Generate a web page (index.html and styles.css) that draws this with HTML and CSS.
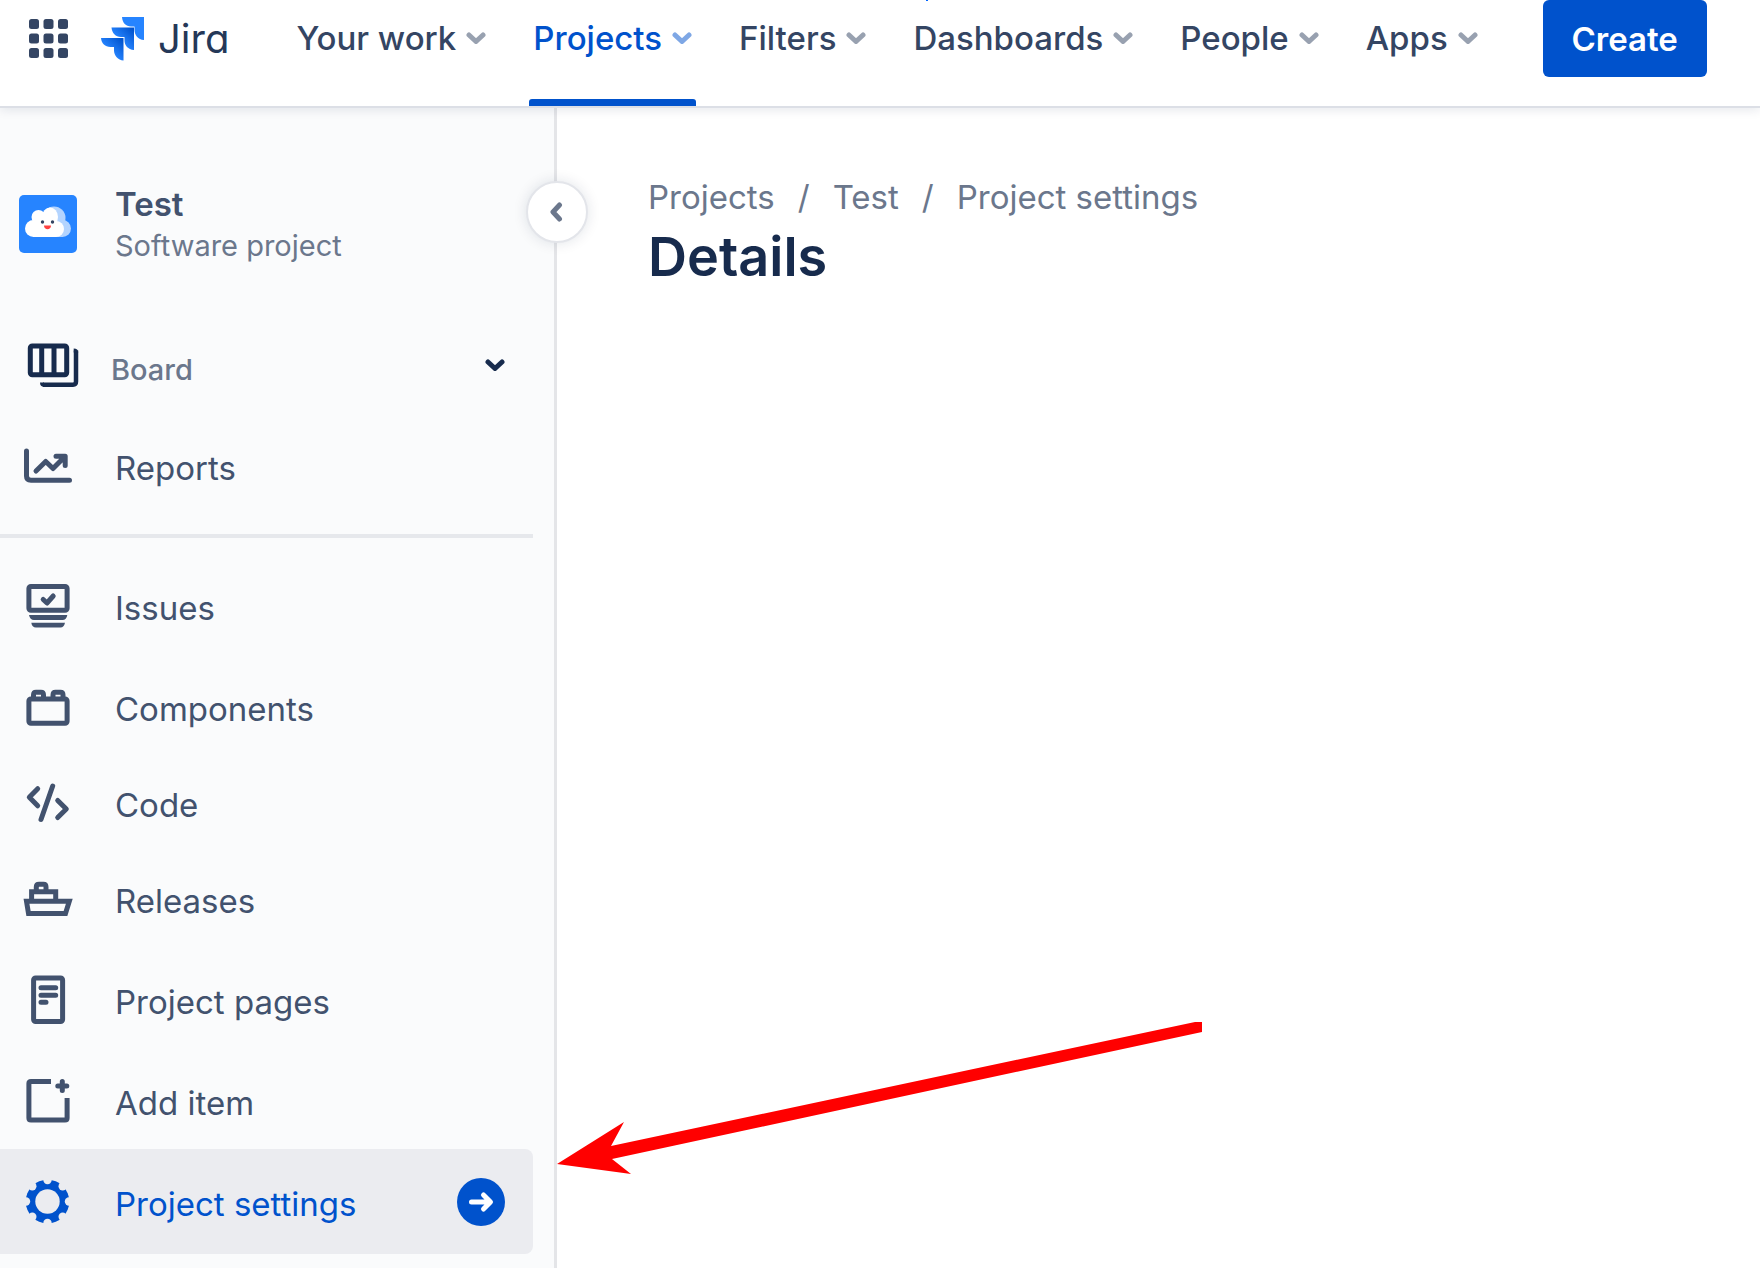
FILE: index.html
```html
<!DOCTYPE html>
<html lang="en">
<head>
<meta charset="utf-8">
<meta name="viewport" content="width=device-width, initial-scale=1">
<title>Details - Project settings - Jira</title>
<link rel="stylesheet" href="styles.css">
</head>
<body>
<svg class="defs" aria-hidden="true">
  <defs>
    <linearGradient id="logo-mid" x1="1" y1="0" x2="0.4" y2="0.6"><stop offset="0.1" stop-color="#0052cc"/><stop offset="1" stop-color="#2684ff"/></linearGradient>
    <symbol id="chevron" viewBox="0 0 20 12"><path d="M3 3l7 6.5L17 3" fill="none" stroke="currentColor" stroke-width="5" stroke-linecap="round" stroke-linejoin="round"/></symbol>
  </defs>
</svg>

<header class="topbar">
  <button class="switcher" type="button" aria-label="Switch to">
    <svg width="39" height="39" viewBox="0 0 39 39" fill="currentColor"><rect width="10" height="10" rx="2.5"/><rect x="14.500" width="10" height="10" rx="2.500"/><rect x="29" width="10" height="10" rx="2.500"/><rect y="14.500" width="10" height="10" rx="2.500"/><rect x="14.500" y="14.500" width="10" height="10" rx="2.500"/><rect x="29" y="14.500" width="10" height="10" rx="2.500"/><rect y="29" width="10" height="10" rx="2.500"/><rect x="14.500" y="29" width="10" height="10" rx="2.500"/><rect x="29" y="29" width="10" height="10" rx="2.500"/></svg>
  </button>
  <a class="logo" href="#">
    <svg width="44" height="44" viewBox="0 0 44 44" aria-hidden="true">
      <path d="M21 0H43V23C37 22.500 33.500 18 33.500 13V9.500H30C25 9.500 21.500 6 21 0Z" fill="#2684ff"/>
      <path d="M10.500 10.500H33V33C27 32.500 23.500 28.500 23.500 23.500V20H20C14.500 20 11 16 10.500 10.500Z" fill="url(#logo-mid)"/>
      <path d="M0 21H22.500V43.500C17 43 13 38.500 13 33.500V30H9.500C4 30 0.500 26.500 0 21Z" fill="url(#logo-mid)"/>
    </svg>
    <span>Jira</span>
  </a>
  <nav class="menu" aria-label="Main">
    <button type="button">Your work<svg class="chev"><use href="#chevron"/></svg></button>
    <button type="button" class="current">Projects<svg class="chev"><use href="#chevron"/></svg></button>
    <button type="button">Filters<svg class="chev"><use href="#chevron"/></svg></button>
    <button type="button" class="marked">Dashboards<svg class="chev"><use href="#chevron"/></svg></button>
    <button type="button">People<svg class="chev"><use href="#chevron"/></svg></button>
    <button type="button">Apps<svg class="chev"><use href="#chevron"/></svg></button>
  </nav>
  <button class="create" type="button">Create</button>
</header>

<div class="layout">
  <aside class="sidebar">
    <div class="project">
      <svg class="avatar" viewBox="0 0 58 58" aria-hidden="true">
        <rect width="58" height="58" rx="5" fill="#2684ff"/>
        <g fill="#b3d4ff"><circle cx="35" cy="23" r="11.500"/><circle cx="43.500" cy="33.500" r="8.500"/><rect x="20" y="30" width="24" height="12"/></g>
        <g fill="#fff"><circle cx="14.500" cy="33.500" r="8.500"/><circle cx="19.500" cy="22" r="7"/><ellipse cx="31" cy="22" rx="8" ry="9.500"/><circle cx="37" cy="34" r="8"/><rect x="14" y="20" width="23" height="22"/></g>
        <circle cx="23.500" cy="27" r="1.700" fill="#344563"/><circle cx="33.500" cy="27" r="1.700" fill="#344563"/>
        <path d="M25 30.500h7c0 5-7 5-7 0Z" fill="#ff4040"/>
      </svg>
      <div class="project-text">
        <strong>Test</strong>
        <span>Software project</span>
      </div>
    </div>

    <nav aria-label="Project">
      <ul class="items">
        <li><a class="item board" href="#">
          <svg class="icon" viewBox="0 0 58 58"><rect x="11.300" y="9.900" width="36.400" height="28.800" rx="2"/><path d="M22.700 10v28M35 10v28"/><path d="M57 14.500V45.500Q57 48.700 54 48.700H24" stroke-width="4.500"/><path d="M54.700 12.500q4.500 0 4.500 4h-4.500zM21 46.500q0 4.400 4 4.400v-4.400z" class="solid"/></svg>
          <span class="label">Board</span><svg class="chev"><use href="#chevron"/></svg></a></li>
        <li><a class="item" href="#">
          <svg class="icon round" viewBox="0 0 58 58"><path d="M7.500 14V39Q7.500 43.200 12 43.200H50.500M17 34L26.700 24.500L34 31.500L45 20.500M37 19.200H46.200V28.500"/><path d="M40 19h6v7z" class="solid"/></svg>
          <span class="label">Reports</span></a></li>
      </ul>
      <hr class="divider">
      <ul class="items">
        <li><a class="item" href="#">
          <svg class="icon" viewBox="0 0 58 58"><rect x="9.900" y="9.400" width="38.200" height="23.800" rx="2"/><path class="round" d="M24.200 22.500L28 26L34.200 19"/><path class="solid" d="M10 38H48.300Q47.500 43 43.500 43H15Q11 43 10 38ZM12.300 45.700H46Q45 50.400 41.500 50.400H17Q13 50.400 12.300 45.700Z"/></svg>
          <span class="label">Issues</span></a></li>
        <li><a class="item" href="#">
          <svg class="icon" viewBox="0 0 58 58"><rect x="9.900" y="21" width="38.200" height="24.300" rx="2"/><path d="M14.500 21V17Q14.500 14.300 17 14.300H22Q24.500 14.300 24.500 17V21M34 21V17Q34 14.300 36.500 14.300H41.500Q44 14.300 44 17V21"/></svg>
          <span class="label">Components</span></a></li>
        <li class="tight"><a class="item" href="#">
          <svg class="icon round" viewBox="0 0 58 58"><path d="M18.700 14.700L10.300 23.300L18.700 31.800M33.700 12L22 45.500M38.700 26.500L47.300 35L38.700 43.500"/></svg>
          <span class="label">Code</span></a></li>
        <li class="tight"><a class="item" href="#">
          <svg class="icon" viewBox="0 0 58 58"><path d="M7.500 31.300H50.300L46.500 43.400H9.500ZM12.600 31V21.700H36.700V31M17.300 21V17Q17.300 14.300 20 14.300H24.500Q27 14.300 27 17V21"/></svg>
          <span class="label">Releases</span></a></li>
        <li><a class="item" href="#">
          <svg class="icon round" viewBox="0 0 58 58"><rect x="14.600" y="7" width="29" height="43.600" rx="2"/><path d="M22 16.800H36.700M22 24.200H36.700M22 31.300H27"/></svg>
          <span class="label">Project pages</span></a></li>
        <li><a class="item" href="#">
          <svg class="icon" viewBox="0 0 58 58"><path d="M32 9.400H12Q9.900 9.400 9.900 11.500V46Q9.900 48 12 48H46Q48.100 48 48.100 46V26"/><path class="round" d="M43.300 9.500V18.500M38.800 14H47.800"/></svg>
          <span class="label">Add item</span></a></li>
        <li class="tight"><a class="item selected" href="#" aria-current="page">
          <svg class="icon" viewBox="0 0 58 58">
            <mask id="gear" maskUnits="userSpaceOnUse" x="0" y="0" width="58" height="58">
              <g stroke="none"><circle cx="28.500" cy="28.500" r="21.800" fill="#fff"/>
              <g fill="#000"><circle cx="28.500" cy="28.500" r="12.200"/><circle cx="28.500" cy="7" r="4.200"/><circle cx="43.700" cy="13.300" r="4.200"/><circle cx="50" cy="28.500" r="4.200"/><circle cx="43.700" cy="43.700" r="4.200"/><circle cx="28.500" cy="50" r="4.200"/><circle cx="13.300" cy="43.700" r="4.200"/><circle cx="7" cy="28.500" r="4.200"/><circle cx="13.300" cy="13.300" r="4.200"/></g></g>
            </mask>
            <rect class="solid" width="58" height="58" mask="url(#gear)"/>
          </svg>
          <span class="label">Project settings</span>
          <svg class="go" viewBox="0 0 48 48" aria-hidden="true"><circle cx="24" cy="24" r="24" fill="#0052cc"/><path d="M14.500 24H33M26.500 17L33.500 24L26.500 31" fill="none" stroke="#fff" stroke-width="5" stroke-linecap="round" stroke-linejoin="round"/></svg></a></li>
      </ul>
    </nav>
    <button class="collapse" type="button" aria-label="Collapse sidebar">
      <svg width="14" height="20" viewBox="0 0 14 20"><path d="M10.500 3L4 10l6.500 7" fill="none" stroke="currentColor" stroke-width="5" stroke-linecap="round" stroke-linejoin="round"/></svg>
    </button>
  </aside>

  <main class="content">
    <nav aria-label="Breadcrumb">
      <ol class="crumbs">
        <li><a href="#">Projects</a></li>
        <li><a href="#">Test</a></li>
        <li><a href="#">Project settings</a></li>
      </ol>
    </nav>
    <h1>Details</h1>
    <svg class="pointer" viewBox="0 0 646 154" aria-hidden="true"><path d="M0 143L67 101L54 125L638 1H645V11L55 138L74 153Z" fill="#f00"/></svg>
  </main>
</div>
</body>
</html>
```
FILE: styles.css
```css
* {
  box-sizing: border-box;
}

body {
  margin: 0;
  min-height: 100vh;
  display: flex;
  flex-direction: column;
  background: #fff;
  color: #42526e;
  font-family: Inter, "Liberation Sans", sans-serif;
  font-size: 33px;
}

button {
  margin: 0;
  padding: 0;
  border: 0;
  background: none;
  color: inherit;
  font: inherit;
  cursor: pointer;
}

a {
  color: inherit;
  text-decoration: none;
}

ul,
ol {
  margin: 0;
  padding: 0;
  list-style: none;
}

svg {
  display: block;
  flex: none;
}

.defs {
  position: absolute;
  width: 0;
  height: 0;
}

/* Top bar */

.topbar {
  position: relative;
  z-index: 2;
  display: flex;
  align-items: flex-start;
  height: 108px;
  padding-left: 29px;
  border-bottom: 2px solid #dcdfe6;
  box-shadow: 0 2px 10px rgba(9, 30, 66, 0.1);
  background: #fff;
  color: #344563;
}

.switcher,
.logo {
  display: flex;
  align-items: center;
  height: 77px;
}

.logo {
  gap: 13px;
  margin-left: 33px;
  color: #253858;
  font-size: 40px;
  font-feature-settings: "cv11";
}

.menu {
  display: flex;
  gap: 39px;
  margin-left: 63px;
}

.menu button {
  position: relative;
  display: flex;
  align-items: center;
  gap: 10px;
  height: 106px;
  padding: 0 4px 30px;
  font-weight: 500;
  white-space: nowrap;
}

.chev {
  width: 20px;
  height: 12px;
}

.menu .chev {
  opacity: 0.5;
}

.menu .current {
  color: #0052cc;
}

.menu .current::after {
  content: "";
  position: absolute;
  right: 0;
  bottom: 0;
  left: 0;
  height: 7px;
  border-radius: 3px 3px 0 0;
  background: #0052cc;
}

.menu .marked::before {
  content: "";
  position: absolute;
  top: 0;
  left: 17px;
  width: 2px;
  height: 1px;
  background: #0065ff;
}

.create {
  width: 164px;
  height: 77px;
  margin-left: 61px;
  border-radius: 6px;
  background: #0052cc;
  color: #fff;
  font-weight: 600;
}

/* Sidebar */

.layout {
  flex: 1;
  display: flex;
}

.sidebar {
  position: relative;
  flex: none;
  width: 557px;
  padding: 74px 21px 14px 0;
  border-right: 3px solid #e4e5e8;
  background: #fafbfc;
}

.project {
  display: flex;
  align-items: center;
  gap: 38px;
  margin-bottom: 51px;
  padding-left: 19px;
}

.avatar {
  width: 58px;
  height: 58px;
}

.project-text {
  display: flex;
  flex-direction: column;
}

.project-text strong {
  font-weight: 600;
  line-height: 44px;
}

.project-text span {
  color: #6b778c;
  font-size: 29px;
  line-height: 40px;
}

.items li + li {
  margin-top: 5px;
}

.items li.tight {
  margin-top: 0;
}

.item {
  display: flex;
  align-items: center;
  gap: 38px;
  height: 96px;
  padding: 0 28px 0 19px;
}

.icon {
  width: 58px;
  height: 58px;
  overflow: visible;
  fill: none;
  stroke: currentColor;
  stroke-width: 5;
}

.round {
  stroke-linecap: round;
  stroke-linejoin: round;
}

.solid {
  fill: currentColor;
  stroke: none;
}

.label {
  flex: 1;
  padding-top: 4px;
}

.board {
  gap: 34px;
  color: #172b4d;
}

.board .label {
  padding-top: 8px;
  color: #6b778c;
  font-size: 29px;
  font-weight: 500;
}

.selected {
  height: 105px;
  border-radius: 0 8px 8px 0;
  background: #ebecf0;
  color: #0052cc;
}

.go {
  width: 48px;
  height: 48px;
}

.divider {
  height: 4px;
  margin: 20px 0 20px;
  border: 0;
  background: #e6e8ec;
}

.collapse {
  position: absolute;
  top: 73px;
  right: -34px;
  display: flex;
  align-items: center;
  justify-content: center;
  width: 62px;
  height: 62px;
  padding-right: 2px;
  border: 2px solid #e3e5ea;
  border-radius: 50%;
  box-shadow: 0 0 14px rgba(9, 30, 66, 0.12);
  background: #fff;
  color: #6b778c;
}

/* Content */

.content {
  position: relative;
  flex: 1;
  min-width: 0;
  padding: 69px 40px 0 91px;
}

.crumbs {
  display: flex;
  color: #6b778c;
  line-height: 40px;
}

.crumbs li + li::before {
  content: "/";
  margin: 0 23px;
}

h1 {
  margin: 8px 0 0;
  color: #172b4d;
  font-size: 54px;
  font-weight: 600;
  line-height: 64px;
}

.pointer {
  position: absolute;
  top: 913px;
  left: 0;
  width: 646px;
  height: 154px;
}
```
